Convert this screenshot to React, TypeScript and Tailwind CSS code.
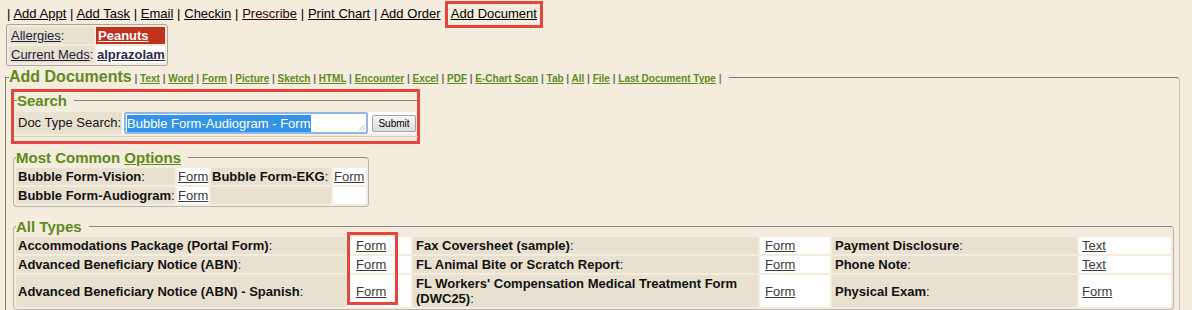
import React, { Fragment } from "react";

const GREEN = "text-[#5f8a1d]";

function TopBar() {
  const items = ["Add Appt", "Add Task", "Email", "Checkin", "Prescribe", "Print Chart", "Add Order"];
  return (
    <div className="pl-[7px] pt-[5px] leading-[18px] h-[23px] whitespace-nowrap text-[13px] [word-spacing:0.15px]">
      {items.map((t) => (
        <Fragment key={t}>
          {"| "}
          <a className={`underline ${t === "Prescribe" ? "text-[#2a0505]" : "text-black"}`}>{t}</a>{" "}
        </Fragment>
      ))}
      {"| "}
      <span className="relative">
        <a className="underline text-black">Add Document</a>
        <span className="absolute left-[-6px] right-[-6px] top-[-5px] bottom-[-7px] border-[3px] border-[#e4463d]" />
      </span>
    </div>
  );
}

function Allergies() {
  return (
    <div className="ml-[6px] mt-[1px] w-[162px] border border-[#a9a6a0] rounded-[3px] p-[2px] flex flex-col gap-[2px]">
      <div className="flex gap-[2px] h-[17px] leading-[17px]">
        <div className="w-[85px] bg-[#e8e1d0] pl-[2px]">
          <span className="underline text-[#1c1c3c]">Allergies</span>
          <span className="text-[#1c1c3c]">:</span>
        </div>
        <div className="flex-1 bg-[#c0311c] pl-[2px] font-bold text-white underline">Peanuts</div>
      </div>
      <div className="flex gap-[2px] h-[17px] leading-[17px]">
        <div className="w-[85px] bg-[#e8e1d0] pl-[2px]">
          <span className="underline text-[#1c1c3c]">Current Meds</span>
          <span className="text-[#1c1c3c]">:</span>
        </div>
        <div className="flex-1 bg-white pl-[1px] font-bold text-[#2a2a4a] underline">alprazolam</div>
      </div>
    </div>
  );
}

function Label({ text, className = "" }: { text: string; className?: string }) {
  return (
    <div className={`bg-[#e8e1d0] flex items-center text-[#111] ${className}`}>
      <span>
        <span className="font-bold">{text}</span>:
      </span>
    </div>
  );
}

function LinkCell({ text, className = "" }: { text: string; className?: string }) {
  return (
    <div className={`bg-white flex items-center ${className}`}>
      <a className="underline text-[#3a3a3a]">{text}</a>
    </div>
  );
}

export default function App() {
  const docLinks = [
    "Text", "Word", "Form", "Picture", "Sketch", "HTML", "Encounter", "Excel", "PDF",
    "E-Chart Scan", "Tab", "All", "File", "Last Document Type",
  ];
  const rows: [string, string, string, string, string, string][] = [
    ["Accommodations Package (Portal Form)", "Form", "Fax Coversheet (sample)", "Form", "Payment Disclosure", "Text"],
    ["Advanced Beneficiary Notice (ABN)", "Form", "FL Animal Bite or Scratch Report", "Form", "Phone Note", "Text"],
    ["Advanced Beneficiary Notice (ABN) - Spanish", "Form", "FL Workers' Compensation Medical Treatment Form (DWC25)", "Form", "Physical Exam", "Form"],
  ];
  return (
    <div className="w-[1192px] h-[310px] overflow-hidden bg-[#f4ecdc] font-['Liberation_Sans',Arial,sans-serif] text-[13px] text-black">
      <TopBar />
      <Allergies />
      <fieldset className="ml-[5px] mt-[2px] w-[1175px] border border-[#c9c6c0] border-l-[#7a7a7a] border-t-[#7a7a7a] rounded-tr-[4px] pl-[3px] pr-[2px] pb-[10px]">
        <legend className="pr-[8px] h-[18px] leading-[18px] whitespace-nowrap">
          <span className={`text-[16px] font-bold leading-[18px] ${GREEN}`}>Add Documents</span>
          <span className="text-[10px] font-bold leading-none">
            {docLinks.map((l) => (
              <Fragment key={l}>
                <span className="text-[#6b6b6b]"> | </span>
                <a className={`underline ${GREEN}`}>{l}</a>
              </Fragment>
            ))}
            <span className="text-[#6b7f9a]"> |</span>
          </span>
        </legend>

        {/* Search */}
        <div className="ml-[2px] mt-[3px] w-[409px] border-[3px] border-[#e4463d] pb-[4px]">
          <fieldset className="border-t border-b border-t-[#828282] border-b-[#d6cebd] px-[2px] pb-[2px]">
            <legend className={`ml-[1px] pr-[7px] text-[15px] font-bold leading-[17px] ${GREEN}`}>Search</legend>
            <div className="mt-[3px] flex h-[22px]">
              <div className="w-[106px] bg-[#e8e1d0] pl-[2px] leading-[22px] text-[#111]">Doc Type Search:</div>
              <div className="flex-1 bg-white flex items-center pl-[2px]">
                <div className="relative w-[244px] h-[22px] border-2 border-[#90b6ec] rounded-[2px] bg-white pl-[1px] pt-[0px]">
                  <span className="bg-[#3393e6] text-white leading-[17px] inline-block">Bubble Form-Audiogram - Form</span>
                  <svg className="absolute right-[1px] bottom-[1px]" width="7" height="7" viewBox="0 0 7 7">
                    <line x1="6.5" y1="1" x2="1" y2="6.5" stroke="#b5b5b5" strokeWidth="1" />
                    <line x1="6.5" y1="4" x2="4" y2="6.5" stroke="#b5b5b5" strokeWidth="1" />
                  </svg>
                </div>
                <button className="ml-[4px] w-[44px] h-[17px] border border-[#a3a3a3] rounded-[2px] bg-linear-to-b from-[#f7f7f7] to-[#dcdcdc] text-[10px] leading-[15px] text-center text-black">
                  Submit
                </button>
              </div>
            </div>
          </fieldset>
        </div>

        {/* Most Common */}
        <fieldset className="ml-[4px] mt-[5px] w-[356px] border border-[#b9b6b0] border-t-[#8a8a8a] rounded-[4px] px-[2px] pb-[2px]">
          <legend className={`pr-[7px] text-[15px] font-bold leading-[17px] ${GREEN}`}>
            Most Common <span className="underline">Options</span>
          </legend>
          <div className="mt-[2px] grid grid-cols-[159px_32px_120px_33px] auto-rows-[17px] gap-[2px]">
            <Label text="Bubble Form-Vision" className="pl-[2px]" />
            <LinkCell text="Form" className="pl-[1px]" />
            <Label text="Bubble Form-EKG" className="pl-[1px]" />
            <LinkCell text="Form" className="pl-[1px]" />
            <Label text="Bubble Form-Audiogram" className="pl-[2px]" />
            <LinkCell text="Form" className="pl-[1px]" />
            <div className="bg-[#e8e1d0]" />
            <div className="bg-white" />
          </div>
        </fieldset>

        {/* All Types */}
        <fieldset className="ml-[4px] mt-[11px] w-[1161px] border border-[#b9b6b0] border-t-[#8a8a8a] rounded-[4px] px-[2px] pb-[2px]">
          <legend className={`pr-[7px] text-[15px] font-bold leading-[17px] ${GREEN}`}>All Types</legend>
          <div className="relative mt-[2px]">
            <div className="grid grid-cols-[330px_63px_345px_70px_245px_92px] gap-[2px] leading-[15px]">
              {rows.map((r, i) => (
                <Fragment key={i}>
                  <Label text={r[0]} className="pl-[2px] py-[1px] min-h-[17px]" />
                  <LinkCell text={r[1]} className="pl-[8px] py-[1px]" />
                  <Label text={r[2]} className="pl-[3px] py-[1px] pr-[6px]" />
                  <LinkCell text={r[3]} className="pl-[5px] py-[1px]" />
                  <Label text={r[4]} className="pl-[3px] py-[1px]" />
                  <LinkCell text={r[5]} className="pl-[3px] py-[1px]" />
                </Fragment>
              ))}
            </div>
            <div className="absolute left-[331px] top-[-5px] w-[51px] h-[73px] border-[3px] border-[#e4463d]" />
          </div>
        </fieldset>
      </fieldset>
    </div>
  );
}
